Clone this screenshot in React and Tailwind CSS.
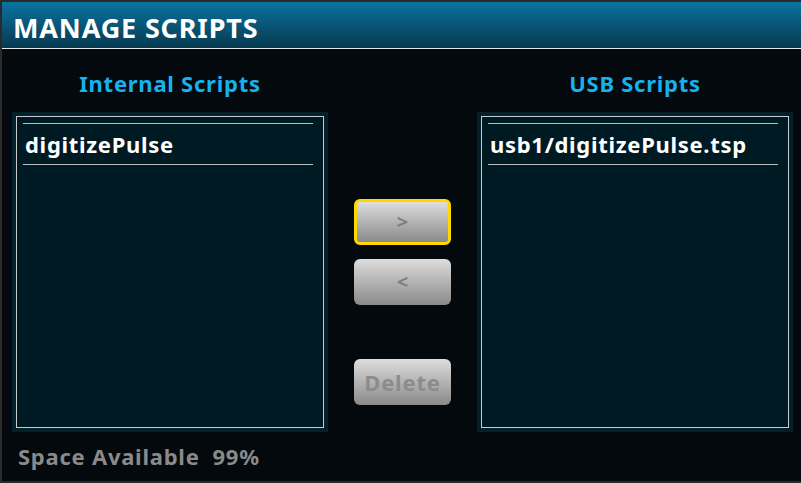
import React from "react";

const font = { fontFamily: '"Noto Sans", "Open Sans", "DejaVu Sans", sans-serif' };

const ScriptPanel = ({ title, items }) => (
	<div className="flex flex-col w-[316px]">
		{/* Panel heading */}
		<div className="h-[63px] flex items-center justify-center pt-[4px]">
			<span className="text-[22px] font-bold text-[#17b2ee] leading-none tracking-[0.75px]">{title}</span>
		</div>
		{/* List box */}
		<div className="h-[320px] bg-[#03202b] p-[4px]">
			<div className="h-full border border-[#cacaca] bg-[#001a24] pt-[6px] pl-[6px] pr-[10px]">
				{items.map((item) => (
					<div
						key={item}
						className="h-[42px] border-t border-b border-[#bdbdbd] flex items-center pl-[2px] text-[22px] font-bold text-white leading-none tracking-[0.7px]">
						{item}
					</div>
				))}
			</div>
		</div>
	</div>
);

const GrayButton = ({ label, selected }) => (
	<button
		className={
			"w-[97px] h-[46px] rounded-[6px] bg-gradient-to-b from-[#dedede] to-[#8a8a8a] flex items-center justify-center leading-none font-bold text-[#7e7e7e] " +
			(selected ? "border-[3px] border-[#ffd800] " : "") +
			(label === "Delete" ? "text-[22px] tracking-[0.8px] text-[#8c8c8c]" : "text-[20px]")
		}>
		{label}
	</button>
);

export default function App() {
	return (
		<div
			style={font}
			className="w-[801px] h-[483px] bg-[#03090c] border-t-2 border-l-2 border-b-2 border-[#2a2a2a] flex flex-col overflow-hidden">
			{/* Header */}
			<div className="h-[46px] shrink-0 bg-gradient-to-b from-[#0874a2] to-[#073a50] flex items-center pl-[11px] pt-[4px]">
				<h1 className="text-[27px] font-bold text-white tracking-[0.85px] leading-none">MANAGE SCRIPTS</h1>
			</div>
			<div className="h-px bg-[#e6e6e6] shrink-0" />

			{/* Body */}
			<div className="flex pl-[10px]">
				<div className="flex flex-col">
					<ScriptPanel title="Internal Scripts" items={["digitizePulse"]} />
					<div className="pt-[13px] pl-[6px] text-[22px] font-bold text-[#8a8a8a] leading-none tracking-[0.75px]">
						Space Available&nbsp;&nbsp;99%
					</div>
				</div>

				<div className="flex flex-col w-[97px] mx-[26px] pt-[150px]">
					<GrayButton label=">" selected />
					<div className="h-[14px]" />
					<GrayButton label="<" />
					<div className="h-[54px]" />
					<GrayButton label="Delete" />
				</div>

				<ScriptPanel title="USB Scripts" items={["usb1/digitizePulse.tsp"]} />
			</div>
		</div>
	);
}
